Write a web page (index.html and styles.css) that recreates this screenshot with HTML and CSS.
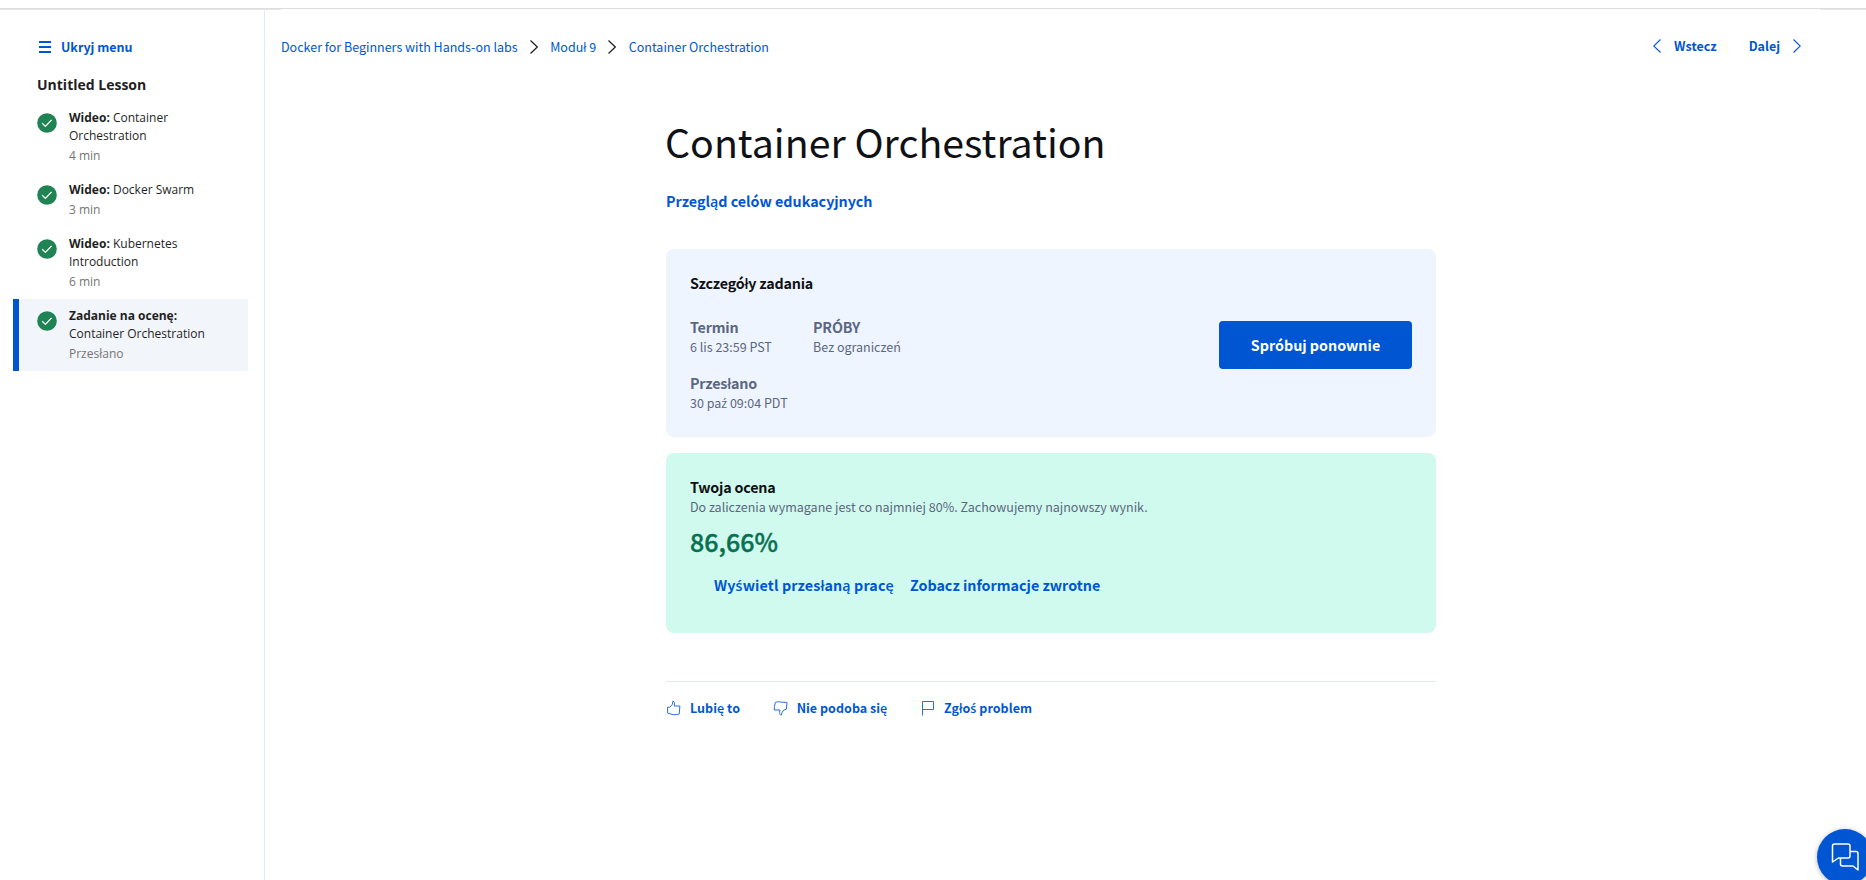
FILE: index.html
```
<!DOCTYPE html>
<html lang="pl">
<head>
<meta charset="utf-8">
<title>Container Orchestration</title>
<link rel="stylesheet" href="styles.css">
</head>
<body>
<div class="page">
  <aside class="sidebar">
    <a class="toggle"><svg width="12" height="12" viewBox="0 0 12 12"><path d="M0 1h12M0 6h12M0 11h12" stroke="#0056d2" stroke-width="2"/></svg><span>Ukryj menu</span></a>
    <h2 class="lesson">Untitled Lesson</h2>
    <ul class="items">
      <li class="item"><svg class="check" viewBox="0 0 20 20"><circle cx="10" cy="10" r="9.8" fill="#1f8354"/><path d="M5.2 10.3l3.2 3.1 6.2-6.5" fill="none" stroke="#fff" stroke-width="1.3"/></svg><div class="item-body"><div><b>Wideo:</b> Container Orchestration</div><div class="meta">4 min</div></div></li>
      <li class="item"><svg class="check" viewBox="0 0 20 20"><circle cx="10" cy="10" r="9.8" fill="#1f8354"/><path d="M5.2 10.3l3.2 3.1 6.2-6.5" fill="none" stroke="#fff" stroke-width="1.3"/></svg><div class="item-body"><div><b>Wideo:</b> Docker Swarm</div><div class="meta">3 min</div></div></li>
      <li class="item"><svg class="check" viewBox="0 0 20 20"><circle cx="10" cy="10" r="9.8" fill="#1f8354"/><path d="M5.2 10.3l3.2 3.1 6.2-6.5" fill="none" stroke="#fff" stroke-width="1.3"/></svg><div class="item-body"><div><b>Wideo:</b> Kubernetes Introduction</div><div class="meta">6 min</div></div></li>
      <li class="item active"><svg class="check" viewBox="0 0 20 20"><circle cx="10" cy="10" r="9.8" fill="#1f8354"/><path d="M5.2 10.3l3.2 3.1 6.2-6.5" fill="none" stroke="#fff" stroke-width="1.3"/></svg><div class="item-body"><div><b>Zadanie na ocenę:</b> Container Orchestration</div><div class="meta">Przesłano</div></div></li>
    </ul>
  </aside>
  <main class="main">
    <div class="topbar">
      <nav class="crumbs">
        <a>Docker for Beginners with Hands-on labs</a>
        <svg class="chev" viewBox="0 0 8 14"><path d="M.5 .5L7.3 7 .5 13.5" fill="none" stroke="#1f1f1f" stroke-width="1.2"/></svg>
        <a>Moduł 9</a>
        <svg class="chev" viewBox="0 0 8 14"><path d="M.5 .5L7.3 7 .5 13.5" fill="none" stroke="#1f1f1f" stroke-width="1.2"/></svg>
        <a>Container Orchestration</a>
      </nav>
      <nav class="pager">
        <a class="prev"><svg class="chev" viewBox="0 0 8 14"><path d="M7.5 .5L.7 7l6.8 6.5" fill="none" stroke="#0056d2" stroke-width="1.1"/></svg><span>Wstecz</span></a>
        <a class="next"><span>Dalej</span><svg class="chev" viewBox="0 0 8 14"><path d="M.5 .5L7.3 7 .5 13.5" fill="none" stroke="#0056d2" stroke-width="1.1"/></svg></a>
      </nav>
    </div>
    <div class="content">
      <h1 class="title">Container Orchestration</h1>
      <a class="goals">Przegląd celów edukacyjnych</a>
      <section class="card details">
        <h3 class="card-title">Szczegóły zadania</h3>
        <div class="details-row">
          <dl class="facts">
            <div class="fact"><dt>Termin</dt><dd>6 lis 23:59 PST</dd></div>
            <div class="fact"><dt>PRÓBY</dt><dd>Bez ograniczeń</dd></div>
            <div class="fact"><dt>Przesłano</dt><dd>30 pa<span class="acute">ź</span> 09:04 PDT</dd></div>
          </dl>
          <button class="retry">Spróbuj ponownie</button>
        </div>
      </section>
      <section class="card grade">
        <h3 class="card-title">Twoja ocena</h3>
        <p class="note">Do zaliczenia wymagane jest co najmniej 80%. Zachowujemy najnowszy wynik.</p>
        <div class="score">86,66%</div>
        <div class="links"><a class="view">Wy<span class="acute">ś</span>wietl przesłaną pracę</a><a>Zobacz informacje zwrotne</a></div>
      </section>
      <div class="feedback">
        <a><svg width="16" height="16" viewBox="0 0 16 16"><path d="M1.500 7.200H3.800L6.300 4.400L6.900 1.200c1.300.4 1.800 1.500 1.600 2.600L8.200 6h5.700l-.7 8c-2.700 1-5.700.9-8.200.1l-3.300-1z"/></svg><span>Lubię to</span></a>
        <a><svg width="16" height="16" viewBox="0 0 16 16"><path d="M2.300 2.400c2-.8 4-.9 5.800-.2l5.900.2-.6 6.800-2.600.8-1.800 2.400-.6 2.700c-1.500-.3-2-1.400-1.800-2.500L6.900 10H1.200c.2-2.500.3-5 1.100-7.600z"/></svg><span>Nie podoba się</span></a>
        <a><svg width="16" height="16" viewBox="0 0 16 16"><path d="M2.500 15.500V1.500h11v8h-11"/></svg><span>Zgło<span class="acute">ś</span> problem</span></a>
      </div>
    </div>
  </main>
  <button class="chat"><svg width="28" height="28" viewBox="0 0 28 28"><path d="M3.500 1h13.500q2 0 2 2v10q0 2-2 2H7.500L1.500 19V3q0-2 2-2zM19 8.500h6q2 0 2 2V27l-5-4H11.500q-2 0-2-2V15" fill="none" stroke="#fff" stroke-width="1.500" stroke-linejoin="round"/></svg></button>
</div>
</body>
</html>
```
FILE: styles.css
```
* { box-sizing: border-box; }
body, h1, h2, h3, p, ul, dl, dd { margin: 0; padding: 0; }
body {
  height: 880px;
  overflow: hidden;
  background: #fff;
  color: #0f1114;
  font-family: "Noto Sans CJK SC", "Open Sans", sans-serif;
  font-size: 12.5px;
}
a { color: #0056d2; white-space: nowrap; }
svg { display: block; flex: none; }
.acute { font-family: "Open Sans", sans-serif; line-height: 1; }
.page {
  position: relative;
  display: flex;
  height: 880px;
  padding-top: 9px;
  overflow: hidden;
  background:
    linear-gradient(#ddd, #ddd) 0 8px / 100% 1px no-repeat,
    linear-gradient(#e5e5e5, #e5e5e5) 0 9px / 281px 1px no-repeat,
    linear-gradient(#e5e5e5, #e5e5e5) 1820px 9px / 46px 1px no-repeat;
}
.sidebar {
  width: 265px;
  border-right: 1px solid #e1e8f8;
  padding: 28px 16px 0 13px;
  font-family: "Open Sans", sans-serif;
  font-size: 12px;
  color: #1f1f1f;
}
.toggle {
  display: flex;
  align-items: center;
  gap: 10px;
  height: 20px;
  padding-left: 26px;
  font: 600 12.5px/20px "Noto Sans CJK SC", sans-serif;
}
.lesson {
  margin-top: 17px;
  padding-left: 24px;
  font-size: 14px;
  font-weight: 700;
  line-height: 22px;
}
.items { margin-top: 5px; list-style: none; }
.item {
  display: flex;
  gap: 12px;
  padding: 8px 20px 8px 18px;
  border-left: 6px solid transparent;
  line-height: 18px;
}
.item b { font-weight: 700; }
.item.active { background: #f2f5fa; border-left-color: #0056d2; }
.check { width: 20px; height: 20px; margin-top: 4px; }
.meta { margin-top: 2px; color: #757575; }
.main { flex: 1; min-width: 0; }
.topbar {
  display: flex;
  justify-content: space-between;
  padding: 28px 65px 0 16px;
}
.crumbs, .pager, .prev, .next { display: flex; align-items: center; height: 20px; line-height: 20px; }
.pager { height: 18px; gap: 32px; font-weight: 600; }
.prev, .next { gap: 13px; }
.crumbs { gap: 12.3px; }
.chev { width: 8px; height: 14px; }
.content { width: 770px; margin: 54px 0 0 401px; }
.title { margin-left: -1px; font-size: 39.3px; font-weight: 400; line-height: 60px; white-space: nowrap; }
.goals { display: block; margin-top: 18px; font-size: 14.3px; font-weight: 600; line-height: 24px; }
.card { padding: 24px; border-radius: 8px; }
.card-title { font-size: 14.3px; font-weight: 600; letter-spacing: -.2px; line-height: 20px; }
.details { height: 188px; margin-top: 36px; background: #eff5ff; }
.details-row { display: flex; justify-content: space-between; margin-top: 24px; }
.facts { display: grid; grid-template-columns: 123px 160px; row-gap: 16px; color: #5b6780; }
.fact dt { font-size: 14.3px; font-weight: 600; letter-spacing: -.2px; line-height: 20px; }
.fact dd { line-height: 20px; white-space: nowrap; }
.retry {
  width: 193px;
  height: 48px;
  margin-top: 4px;
  padding: 0;
  border: 0;
  border-radius: 4px;
  background: #0056d2;
  color: #fff;
  font: 600 14.3px/24px "Noto Sans CJK SC", sans-serif;
}
.grade { height: 180px; margin-top: 16px; background: #d0faed; }
.note { color: #5b6780; line-height: 20px; white-space: nowrap; }
.score {
  margin-top: 8px;
  color: #087051;
  font-size: 25px;
  font-weight: 500;
  line-height: 32px;
  -webkit-text-stroke: .4px #087051;
}
.links { display: flex; gap: 16px; margin-top: 16px; padding-left: 24px; font-size: 14.3px; font-weight: 600; line-height: 24px; }
.view { letter-spacing: .12px; }
.feedback {
  display: flex;
  gap: 32.6px;
  margin-top: 48px;
  padding-top: 16px;
  border-top: 1px solid #e1e8f8;
  font-weight: 600;
  letter-spacing: .03px;
  line-height: 20px;
}
.feedback a { display: flex; align-items: center; gap: 8px; }
.feedback path { fill: none; stroke: #2a6fdb; stroke-width: 1; stroke-linejoin: round; }
.chat {
  position: absolute;
  left: 1817px;
  top: 829px;
  display: flex;
  align-items: center;
  justify-content: center;
  width: 56px;
  height: 56px;
  padding: 0;
  border: 0;
  border-radius: 50%;
  background: #0056d2;
  box-shadow: 0 1px 5px rgba(0, 0, 0, .3);
}
```
